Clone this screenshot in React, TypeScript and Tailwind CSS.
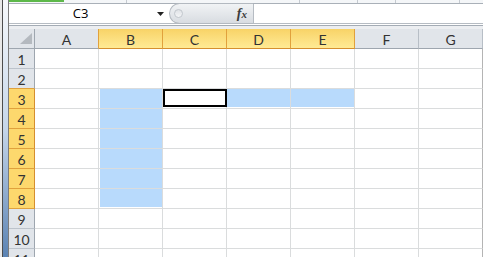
import React from "react";

const COLS = ["A", "B", "C", "D", "E", "F", "G"];
const ROWS = [1, 2, 3, 4, 5, 6, 7, 8, 9, 10, 11];
const SEL_COLS = ["B", "C", "D", "E"];
const isSelRow = (r: number) => r >= 3 && r <= 8;

const cellClass = (col: string, row: number) => {
  if (col === "B" && row >= 3 && row < 8) return "bg-[#b8dafc] shadow-[inset_1px_0_0_#fff]";
  if (col === "B" && row === 8) return "bg-[#b8dafc] shadow-[inset_1px_-1px_0_#fff]";
  if ((col === "D" || col === "E") && row === 3) return "bg-[#b8dafc] shadow-[inset_0_-1px_0_#fff]";
  return "bg-white";
};

const ColHeader = ({ c }: { c: string }) => {
  const sel = SEL_COLS.includes(c);
  const edge = c === "A" ? "border-r-[#e1a13c]" : sel ? "border-r-[#e1a13c]" : "border-r-[#b7bec6]";
  return (
    <div
      className={`w-[64px] h-full shrink-0 flex items-center justify-center pt-[2px] border-r border-b ${edge} ${
        sel
          ? "border-b-[#d58f2f] bg-linear-to-b from-[#f8d367] to-[#ffea94]"
          : "border-b-[#9ea6af] bg-[#e1e5ea]"
      }`}
    >
      {c}
    </div>
  );
};

const RowHeader = ({ r }: { r: number }) => {
  const sel = isSelRow(r);
  const bottom = sel || r === 2 ? "border-b-[#e1a13c]" : "border-b-[#bcc3cb]";
  return (
    <div
      className={`w-[26px] h-full shrink-0 flex items-center justify-center pt-[2px] border-r border-b ${bottom} ${
        sel ? "border-r-[#d58f2f] bg-[#fdd86d]" : "border-r-[#9ea6af] bg-[#e1e5ea]"
      }`}
    >
      {r}
    </div>
  );
};

const App = () => {
  return (
    <div className="w-[483px] h-[257px] overflow-hidden flex bg-white font-['Lato','Open_Sans',sans-serif] text-[14px] text-[#333]">
      {/* window edge behind */}
      <div className="w-[9px] h-full shrink-0 flex">
        <div className="w-[2px] h-full bg-[#e9e9e9]" />
        <div className="w-[1px] h-full bg-[#4d4d4d]" />
        <div className="w-[5px] h-full bg-linear-to-b from-[#f7f9fb] via-[#c6d6ea] to-[#5b83b3]" />
        <div className="w-[1px] h-full bg-[#7c7c7c]" />
      </div>

      <div className="flex-1 flex flex-col">
        {/* ribbon bottom */}
        <div className="h-[4px] shrink-0 flex border-b border-[#a9b0b8] bg-[#f4f6f8]">
          <div className="w-[55px] h-[2px] bg-[#5db84a]" />
          <div className="w-[63px] border-r border-[#c5cad0]" />
          <div className="w-[173px] border-r border-[#c5cad0]" />
          <div className="w-[58px] border-r border-[#c5cad0]" />
          <div className="w-[38px] border-r border-[#c5cad0]" />
          <div className="w-[64px] border-r border-[#c5cad0]" />
        </div>

        {/* formula bar */}
        <div className="h-[20px] shrink-0 flex border-b border-[#b6bcc3]">
          <div className="w-[160px] shrink-0 relative flex items-center bg-white">
            <span className="w-[143px] text-center text-[13px] text-black font-['Open_Sans',sans-serif]">C3</span>
            <svg width="7" height="4" viewBox="0 0 7 4" className="absolute left-[148px] top-[8px]">
              <path d="M0 0h7L3.5 4z" fill="#222" />
            </svg>
          </div>
          <div className="w-[84px] shrink-0 flex items-center justify-between -my-[1px] rounded-l-full border border-r-0 border-[#b3b9c0] bg-linear-to-b from-[#f1f3f5] to-[#d8dce1] pl-[4px] pr-[6px]">
            <div className="w-[9px] h-[9px] rounded-full border border-[#c2c7cd] bg-linear-to-b from-[#dfe2e6] to-[#f4f5f7]" />
            <span className="font-['Liberation_Serif',serif] italic font-bold text-[14px] text-[#3c3c3c] leading-none">
              f<span className="text-[11px]">x</span>
            </span>
          </div>
          <div className="flex-1 bg-white border-l border-[#b6bcc3]" />
        </div>
        <div className="h-[2px] shrink-0 bg-white border-b border-[#a4acb5]" />
        <div className="h-[3px] shrink-0 bg-[#eceef1]" />

        {/* column headers */}
        <div className="h-[20px] flex shrink-0">
          <div className="w-[26px] h-full shrink-0 relative border-r border-b border-r-[#9ea6af] border-b-[#9ea6af] bg-[#e1e5ea]">
            <svg width="12" height="11" viewBox="0 0 12 11" className="absolute left-[11px] top-[4px]">
              <path d="M12 0V11H0z" fill="#b4b9bf" />
            </svg>
          </div>
          {COLS.map((c) => (
            <ColHeader key={c} c={c} />
          ))}
        </div>

        {/* rows */}
        {ROWS.map((r) => (
          <div key={r} className="h-[20px] flex shrink-0">
            <RowHeader r={r} />
            {COLS.map((c) => (
              <div
                key={c}
                className={`w-[64px] h-full shrink-0 border-r border-b border-[#dadcdd] ${
                  c === "G" ? "border-r-[#b4b4b4]" : ""
                } ${c === "C" && r === 3 ? "relative" : ""} ${cellClass(c, r)}`}
              >
                {c === "C" && r === 3 && (
                  <div className="absolute left-0 top-0 w-[64px] h-[18px] border-2 border-black z-10" />
                )}
              </div>
            ))}
          </div>
        ))}
      </div>
    </div>
  );
};

export default App;
